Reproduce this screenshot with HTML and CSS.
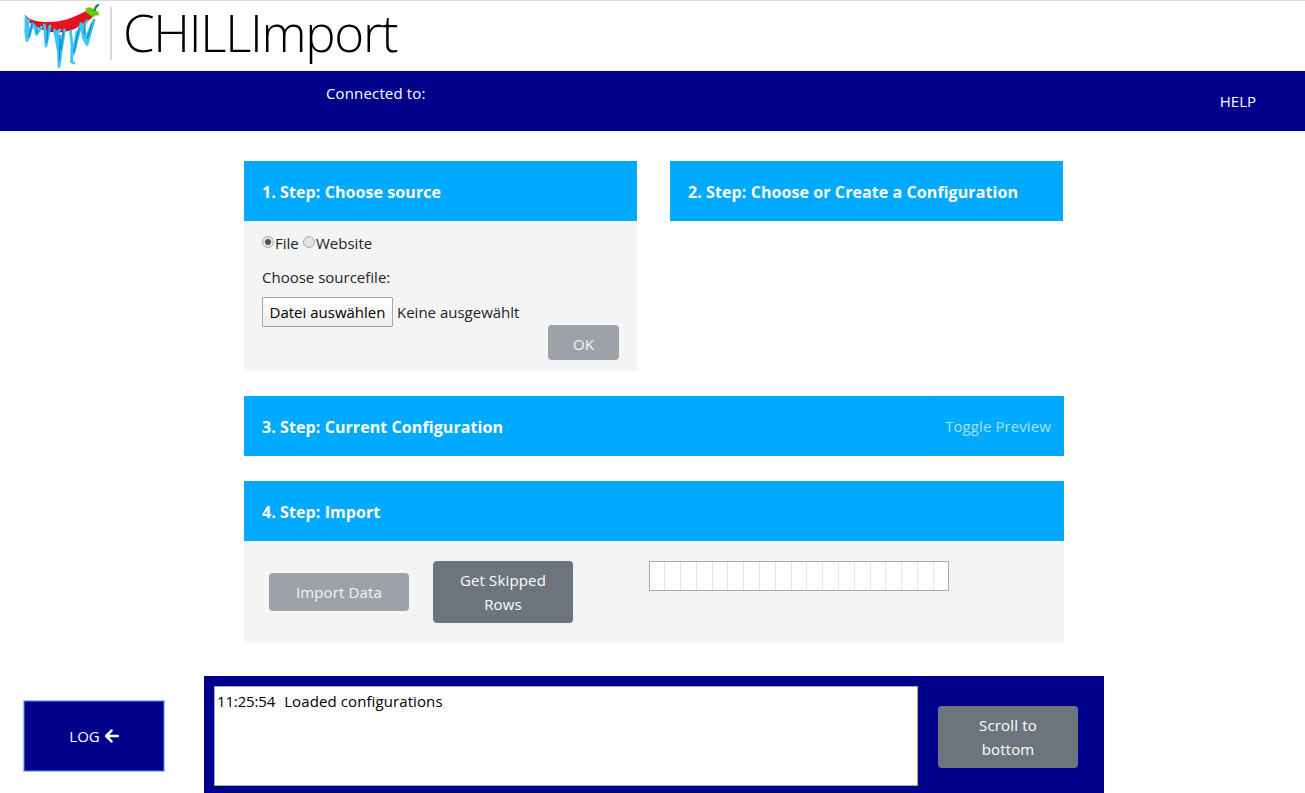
FILE: index.html
```html
<!DOCTYPE html>
<html lang="en">
<head>
<meta charset="utf-8">
<title>CHILLImport</title>
<link rel="stylesheet" href="styles.css">
</head>
<body>
<header class="brand">
  <svg class="logo" width="88" height="69" viewBox="20 1 88 69" fill="none" stroke-linecap="round" stroke-linejoin="round">
    <path fill="#e81123" d="M24.500 14.500C31 21 38 22 49 22C63 22 72 18 86 11L94 16C89 21 82 25 76 28C65 34 48 33 37 27C30 24 26 20 24.500 14.500Z"/>
    <path stroke="#b51a26" stroke-width="1.800" d="M40 28C51 32.500 64 33 76 27"/>
    <g stroke="#3bc6fa" stroke-width="2.800">
      <path d="M26 18L25.800 32L27 40.500L29.500 35L32.500 24L30 31L27 38L28.500 20"/>
      <path d="M34 25L36.500 34.500L41.500 27M44.500 25L46 46L50 26L46 37"/>
      <path d="M54.500 30L58.500 52L59 66.500L61 52L64.500 30L60 46L57 32L60 30"/>
      <path d="M70.500 31L72 45L71.500 62L74 63M73.500 54L81 24L73 54L77 32"/>
      <path d="M81 24L83.500 38L87 44.500L94 20L89 31L86 39L83 26L87 21"/>
    </g>
    <g stroke="#168bc0" stroke-width="1.400">
      <path d="M32 24L29 37M37 26V33M48 28L46.500 42M60 35L59.500 60M63.500 32L61 49M79 28L74 52M92 23L87.500 38M85 24L84.500 34"/>
    </g>
    <path fill="#69cb0a" d="M85.500 8.500C88 6.500 91 7 94 9.500C98 11 100 13 98.500 15.500L95.500 15.500L92.500 17.500L89.500 14.500L86 12.500Z"/>
    <path stroke="#118657" stroke-width="2.300" d="M94.500 10C95 8 96 6 98 4.900"/>
  </svg>
  <span class="brand-rule"></span>
  <h1 class="brand-name">CHILLImport</h1>
</header>
<nav class="nav">
  <span class="connected">Connected to:</span>
  <a class="help">HELP</a>
</nav>
<main class="steps">
  <div class="row">
    <section class="half">
      <h2 class="step-head"><span>1. Step: Choose source</span></h2>
      <div class="source">
        <div class="choices"><i class="radio checked"></i><span class="choice-file">File</span><i class="radio"></i><span>Website</span></div>
        <div class="choose">Choose sourcefile:</div>
        <div class="file"><button class="file-button">Datei auswählen</button><span>Keine ausgewählt</span></div>
        <button class="btn disabled ok">OK</button>
      </div>
    </section>
    <section class="half">
      <h2 class="step-head"><span>2. Step: Choose or Create a Configuration</span></h2>
    </section>
  </div>
  <section class="current">
    <h2 class="step-head"><span>3. Step: Current Configuration</span><button class="toggle">Toggle Preview</button></h2>
  </section>
  <section class="import">
    <h2 class="step-head"><span>4. Step: Import</span></h2>
    <div class="import-body">
      <button class="btn disabled import-button">Import Data</button>
      <button class="btn skipped">Get Skipped<br>Rows</button>
      <div class="progress"><i></i><i></i><i></i><i></i><i></i><i></i><i></i><i></i><i></i><i></i><i></i><i></i><i></i><i></i><i></i><i></i><i></i><i></i></div>
    </div>
  </section>
</main>
<footer class="footer">
  <button class="log-button"><span>LOG</span><svg width="15" height="14" viewBox="0 0 15 14" fill="none" stroke="#fff" stroke-width="2.600" stroke-linecap="round" stroke-linejoin="round"><path d="M7.500 1.700L2.200 7L7.500 12.300M2.500 7H13.600"/></svg></button>
  <div class="log-panel">
    <div class="log-output"><span class="log-time">11:25:54</span><span class="log-text">Loaded configurations</span></div>
    <button class="btn scroll">Scroll to<br>bottom</button>
  </div>
</footer>
</body>
</html>
```
FILE: styles.css
```css
* { box-sizing: border-box; }
body {
  margin: 0;
  height: 793px;
  overflow: hidden;
  background: #fff;
  color: #212529;
  font: 15px/24px "Open Sans", "Noto Sans", sans-serif;
  white-space: nowrap;
}
h1, h2 { margin: 0; }
button { font: inherit; letter-spacing: inherit; padding: 0; border: 0; margin: 0; }
.brand {
  height: 71px;
  border-top: 1px solid #dadbe0;
  display: flex;
  padding-left: 20px;
}
.logo { flex: none; }
.brand-rule { width: 2px; height: 53px; margin: 6px 0 0 2px; background: #d9d9d9; }
.brand-name {
  margin-left: 11px;
  color: #000;
  font-size: 51px;
  font-weight: 300;
  letter-spacing: -1.3px;
  line-height: 62px;
}
.nav {
  height: 60px;
  display: flex;
  justify-content: space-between;
  padding: 10px 49px 0 326px;
  background: #00008b;
  color: #fff;
}
.connected { letter-spacing: 0.15px; }
.help { padding-top: 8px; }
.steps { width: 820px; margin: 30px 0 0 244px; }
.row { display: flex; gap: 33px; height: 235px; }
.half { width: 393px; }
.step-head {
  height: 60px;
  display: flex;
  align-items: center;
  justify-content: space-between;
  padding: 1px 0 0 18px;
  background: #0af;
  color: #fff;
  font-size: 16px;
  font-weight: 700;
  letter-spacing: 0.08px;
}
.source {
  height: 150px;
  display: flex;
  flex-direction: column;
  padding: 10px 18px;
  background: #f4f4f4;
}
.choices { display: flex; height: 24px; }
.radio {
  width: 12px;
  height: 12px;
  margin: 5px 1px 0 0;
  border: 1px solid #aaa;
  border-radius: 50%;
  background: #e2e2e2;
}
.checked { background: radial-gradient(circle, #555 0 2.700px, #e6e6e6 3.400px); }
.choice-file { width: 28px; }
.choose { margin-top: 10px; }
.file { display: flex; height: 30px; margin-top: 8px; align-items: center; gap: 4px; }
.file-button {
  width: 131px;
  height: 30px;
  border: 1px solid #a6a6a6;
  border-radius: 1px;
  background: linear-gradient(#fff, #eee);
  color: #000;
}
.btn { border-radius: 4px; background: #6c757d; color: #fff; }
.disabled { background: #9da2a8; color: #f4f4f4; }
.ok { align-self: flex-end; width: 71px; height: 35px; margin-top: -2px; padding-top: 3px; flex: none; }
.current { height: 85px; }
.toggle {
  width: 132px;
  height: 60px;
  margin-top: -1px;
  border: 1px solid #06a4ed;
  border-radius: 4px;
  background: transparent;
  color: #a6e0ff;
  font-size: 15px;
  font-weight: 400;
}
.import-body {
  height: 102px;
  display: flex;
  align-items: flex-start;
  padding: 20px 25px;
  background: #f4f4f4;
}
.import-button { width: 140px; height: 38px; margin-top: 12px; }
.skipped { width: 140px; height: 62px; margin-left: 24px; }
.import-button, .skipped, .scroll { letter-spacing: 0.15px; }
.progress {
  width: 300px;
  height: 30px;
  display: flex;
  margin-left: 76px;
  border: 1px solid #aaa;
  background: #fff;
}
.progress i { width: 15.800px; flex: none; border-right: 1px solid #e6e6e6; }
.progress i:first-child { width: 15.200px; }
.footer { display: flex; margin-top: 33px; padding-left: 23px; }
.log-button {
  width: 142px;
  height: 72px;
  margin-top: 24px;
  display: flex;
  align-items: center;
  justify-content: center;
  gap: 4px;
  border: 1px solid #9dc3f5;
  box-shadow: inset 0 0 0 1px #1c50c8;
  border-radius: 1px;
  background: #00008b;
  color: #fff;
}
.log-panel {
  width: 900px;
  height: 117px;
  display: flex;
  align-items: flex-start;
  margin-left: 39px;
  padding: 10px;
  background: #00008b;
}
.log-output {
  width: 704px;
  height: 100px;
  padding: 2px;
  border: 1px solid #a9a9a9;
  background: #fff;
  color: #000;
  display: flex;
  gap: 9px;
}
.log-time { letter-spacing: -0.15px; }
.log-text { letter-spacing: 0.1px; }
.scroll { width: 140px; height: 62px; margin: 20px 0 0 20px; }
```
